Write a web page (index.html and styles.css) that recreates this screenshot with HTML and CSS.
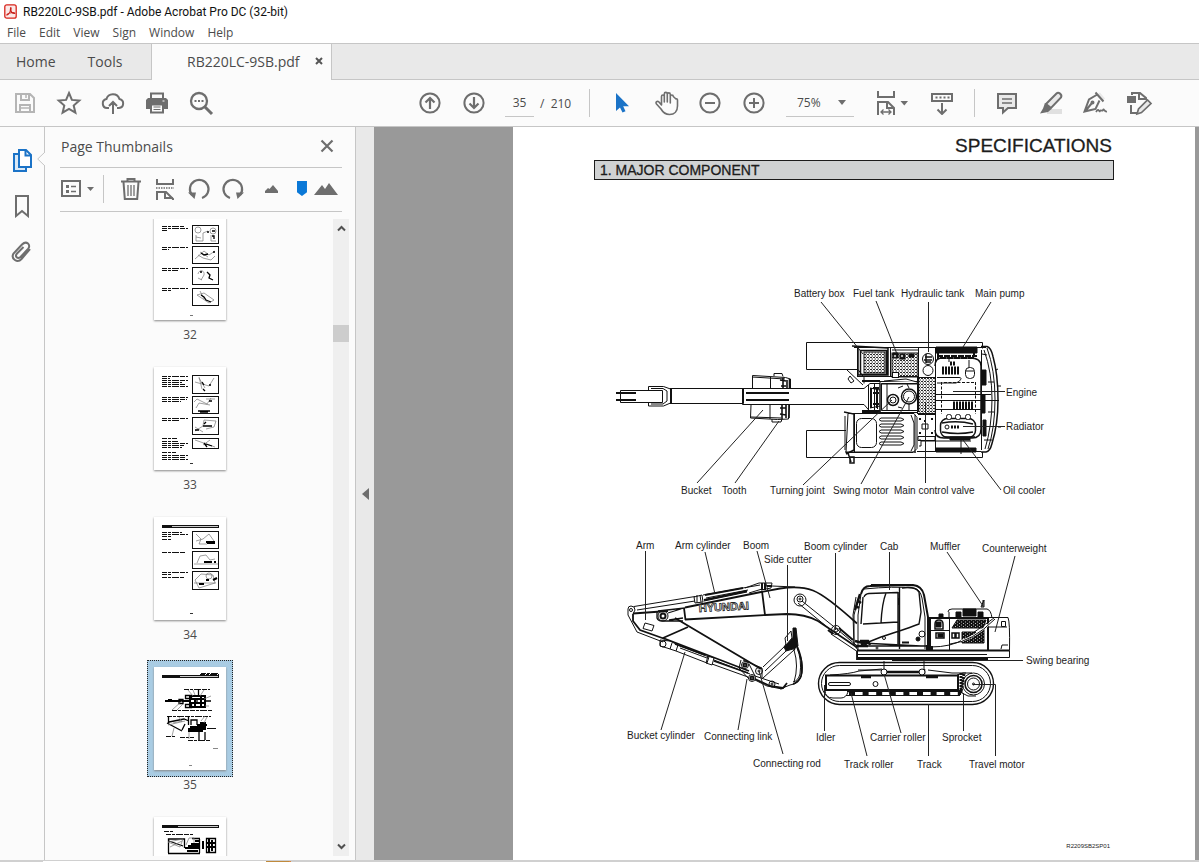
FILE: index.html
```html
<!DOCTYPE html>
<html lang="en">
<head>
<meta charset="utf-8">
<title>RB220LC-9SB.pdf - Adobe Acrobat Pro DC (32-bit)</title>
<link rel="stylesheet" href="styles.css">
</head>
<body>
<header class="titlebar">
  <svg class="app-icon" viewBox="0 0 13 15"><rect x=".8" y=".8" width="11.4" height="13.4" rx="2" fill="#fbe9e8" stroke="#d8251c" stroke-width="1.3"/><path d="M3 11c1.500-.5 3.500-3 3.500-6.500 0-1.500 1-1 .5.5C6.500 7.500 8 9.500 10.300 9.500c1 0 .5-1-1-1C7 8.500 4 9.500 3 10.500z" fill="none" stroke="#c8201a" stroke-width="1.100"/></svg>
  <h1 class="window-title">RB220LC-9SB.pdf - Adobe Acrobat Pro DC (32-bit)</h1>
</header>
<nav class="menubar">
  <button>File</button><button>Edit</button><button>View</button><button>Sign</button><button>Window</button><button>Help</button>
</nav>
<nav class="tabs">
  <div class="tabs-fixed"><button class="tab-home">Home</button><button class="tab-tools">Tools</button></div>
  <div class="tab-doc"><span>RB220LC-9SB.pdf</span><button class="tab-close" aria-label="Close tab"><svg width="8" height="8" viewBox="0 0 8 8"><path d="M1 1l6 6M7 1l-6 6" stroke="#555" stroke-width="2"/></svg></button></div>
</nav>
<div class="toolbar">
  <div class="tools">
    <button aria-label="Save"><svg width="24" height="24" viewBox="0 0 24 24" fill="none" stroke="#b5b5b5" stroke-width="2"><path d="M3 3h14l4 4v14H3zM8 3v6h8V3M7 21v-7h10v7"/><path d="M13 4v3M8 17h8" stroke-width="1.500"/></svg></button>
    <button aria-label="Star"><svg width="26" height="26" viewBox="0 0 26 26" fill="none" stroke="#6e6e6e" stroke-width="2"><path d="M13 3l2.900 6.900 7.400.7-5.600 4.900 1.700 7.200L13 18.900l-6.400 3.800 1.700-7.200-5.600-4.900 7.400-.7z"/></svg></button>
    <button aria-label="Upload"><svg width="24" height="24" viewBox="0 0 24 24" fill="none" stroke="#6e6e6e" stroke-width="2"><path d="M8 17H6a4.500 4.500 0 0 1-.6-8.900 6.800 6.800 0 0 1 13-.2A4.600 4.600 0 0 1 18 17h-2M12 23V11M8 15l4-4 4 4"/></svg></button>
    <button aria-label="Print"><svg width="24" height="24" viewBox="0 0 24 24"><path d="M6 2.500h12V8H6z" fill="#fbfbfb" stroke="#6e6e6e" stroke-width="2"/><path d="M3 7h18l2 2v9H1V9z" fill="#6e6e6e"/><path d="M6 13.500h12v8H6z" fill="#fbfbfb" stroke="#6e6e6e" stroke-width="2"/><path d="M8.500 16h7M8.500 18.500h7" stroke="#6e6e6e"/><path d="M17.500 10h2" stroke="#fff"/></svg></button>
    <button aria-label="Find"><svg width="26" height="26" viewBox="0 0 26 26" fill="none" stroke="#6e6e6e" stroke-width="2.300"><circle cx="11" cy="11" r="8"/><path d="M17 17l7 7" stroke-width="3"/><path d="M6.500 11h9" stroke-width="2" stroke-dasharray="2 1.500"/></svg></button>
  </div>
  <div class="tools tools-main">
    <button aria-label="Previous page"><svg width="24" height="24" viewBox="0 0 24 24" fill="none" stroke="#6e6e6e" stroke-width="2"><circle cx="12" cy="12" r="9.600"/><path d="M12 18V8M7.500 11.500L12 7l4.500 4.500" stroke-width="2.200"/></svg></button>
    <button aria-label="Next page"><svg width="24" height="24" viewBox="0 0 24 24" fill="none" stroke="#6e6e6e" stroke-width="2"><circle cx="12" cy="12" r="9.600"/><path d="M12 6v10M7.500 12.500L12 17l4.500-4.500" stroke-width="2.200"/></svg></button>
    <label class="page-count"><input type="text" value="35" aria-label="Page number"><span>/&nbsp; 210</span></label>
    <i class="divider"></i>
    <button class="after-divider" aria-label="Select"><svg width="24" height="24" viewBox="0 0 24 24"><path d="M6 2v18l4-3.500 2.500 5 3-1.300-2.300-5H19z" fill="#1b73c7"/></svg></button>
    <button aria-label="Pan"><svg width="26" height="26" viewBox="0 0 26 26" fill="none" stroke="#6e6e6e" stroke-width="1.600" stroke-linejoin="round"><path d="M8.500 15V6.500c0-2 2.800-2 2.800 0V12 4c0-2.200 3-2.200 3 0v8V4.500c0-2.200 3-2.200 3 0V13 6.500c0-2 3-2 3 0L23 9c1-.6 1.500 0 1.500 1.500V16c0 5-3 8.500-8 8.500-4.500 0-6.500-2-8.500-5.500l-4.500-5c-1.500-2 .8-3.500 2.500-2z"/></svg></button>
    <button aria-label="Zoom out"><svg width="24" height="24" viewBox="0 0 24 24" fill="none" stroke="#6e6e6e" stroke-width="2"><circle cx="12" cy="12" r="9.600"/><path d="M7 12h10"/></svg></button>
    <button aria-label="Zoom in"><svg width="24" height="24" viewBox="0 0 24 24" fill="none" stroke="#6e6e6e" stroke-width="2"><circle cx="12" cy="12" r="9.600"/><path d="M7 12h10M12 7v10"/></svg></button>
    <label class="zoom"><select aria-label="Zoom level"><option>75%</option></select><svg width="8" height="5" viewBox="0 0 8 5"><path d="M0 0h8L4 5z" fill="#6e6e6e"/></svg></label>
    <button class="fit" aria-label="Fit width"><svg width="32" height="26" viewBox="0 0 32 26" fill="none" stroke="#6e6e6e" stroke-width="2"><path d="M2 1v6h16V1M2 25V12h10l6 6v7M11 12v6h7"/><path d="M5.500 22h9M7.500 19.500L5 22l2.500 2.500M12.500 19.500L15 22l-2.500 2.500" stroke-width="1.300"/><path d="M24.500 11h7.500l-3.700 4.500z" fill="#6e6e6e" stroke="none"/></svg></button>
    <button class="scroll-mode" aria-label="Scrolling"><svg width="24" height="24" viewBox="0 0 24 24" fill="none" stroke="#6e6e6e" stroke-width="2"><rect x="2" y="3" width="20" height="7"/><path d="M5.500 6.500h14" stroke-dasharray="2 2"/><path d="M12 12v11M7.500 18.500L12 23l4.500-4.500"/></svg></button>
    <i class="divider"></i>
    <button class="after-divider" aria-label="Comment"><svg width="24" height="24" viewBox="0 0 24 24" fill="#e9e9e9" stroke="#6e6e6e" stroke-width="2"><path d="M3 3h18v14h-8l-5 4.500V17H3z"/><path d="M7 8h10M7 12h10" stroke-width="1.400"/></svg></button>
    <button aria-label="Highlight"><svg width="26" height="26" viewBox="0 0 26 26"><path d="M9 19h15v5H9z" fill="#e0e0e0"/><path d="M8 14L18.500 3.500c2-2 6 1 4.500 4L13 18z" fill="#e9e9e9" stroke="#6e6e6e" stroke-width="2"/><path d="M7 13l6.500 6L10 22 2 23.500l3-5z" fill="#6e6e6e"/></svg></button>
    <button aria-label="Sign"><svg width="26" height="26" viewBox="0 0 26 26" fill="none" stroke="#6e6e6e" stroke-width="2"><path d="M14 5l4-2.500 5 6-3 3z" fill="#e9e9e9" stroke="none"/><path d="M13.500 2.500l8 9M14.500 5L7 9.500 2.500 21.500 13.500 19l4-8.500M3 21.500l6.500-8"/><circle cx="10.500" cy="12.500" r="1"/><path d="M14 22c3-5 3 1 4-1s2 1 3-1 1 2 4 1.500" stroke-width="1.700"/></svg></button>
    <button aria-label="Edit and export"><svg width="28" height="26" viewBox="0 0 28 26" fill="none" stroke="#6e6e6e" stroke-width="2"><path d="M7 5V3h8l6 5v2M14 3v6h7M6 15v8h6"/><path d="M2 6h9v7H2z" fill="#6e6e6e" stroke="none"/><path d="M12 24l1.500-5L22.500 10l3.500 3.500-9.500 9z" fill="#e9e9e9" stroke-width="1.700"/></svg></button>
  </div>
</div>
<main class="workspace">
  <nav class="rail">
    <button aria-label="Thumbnails"><svg width="22" height="24" viewBox="0 0 22 24" fill="#fff" stroke="#1b73c7" stroke-width="2"><path d="M7 6H3v17h12v-4" fill="#dbe9f6"/><path d="M8 2h7l5 5v12H8z"/><path d="M14.500 2v5.500H20" fill="none"/></svg></button>
    <button aria-label="Bookmarks"><svg width="16" height="24" viewBox="0 0 16 24" fill="none" stroke="#6e6e6e" stroke-width="2"><path d="M2 2h12v20l-6-5-6 5z"/></svg></button>
    <button aria-label="Attachments"><svg width="24" height="24" viewBox="0 0 24 24" fill="none" stroke="#6e6e6e" stroke-width="2"><path d="M20 9l-8.500 10c-4 4.500-11 0-8-5.500L12 4.500c4.500-4.500 9.500.5 6 4.500l-7.500 8c-3 2.500-6-.5-3.500-3.500L13.500 7"/></svg></button>
    <svg class="notch" width="8" height="14" viewBox="0 0 8 14"><path d="M8 0L.7 7 8 14" fill="#fbfbfb" stroke="#c6c6c6"/></svg>
  </nav>
  <section class="panel">
    <div class="panel-head"><h2>Page Thumbnails</h2><button aria-label="Close panel"><svg width="14" height="14" viewBox="0 0 14 14"><path d="M1.500 1.500l11 11M12.500 1.500l-11 11" stroke="#6e6e6e" stroke-width="2.200"/></svg></button></div>
    <div class="panel-tools">
      <button class="options" aria-label="Options"><svg width="34" height="18" viewBox="0 0 34 18"><rect x="1" y="1" width="18" height="15" fill="none" stroke="#6e6e6e" stroke-width="2"/><path d="M5 6.500h3M5 11.500h3" stroke="#6e6e6e" stroke-width="3"/><path d="M10 6.500h5M10 11.500h5" stroke="#6e6e6e" stroke-width="1.500"/><path d="M26 7h7l-3.500 4z" fill="#6e6e6e"/></svg></button>
      <i class="divider small"></i>
      <button aria-label="Delete"><svg width="22" height="24" viewBox="0 0 22 24" fill="none" stroke="#6e6e6e" stroke-width="2"><path d="M1 4.500h20M7.500 4V2h7v2M3.500 5l1.300 17h12.400l1.300-17"/><path d="M8 8v11M11 8v11M14 8v11" stroke-width="1.300"/></svg></button>
      <button aria-label="Split pages"><svg width="20" height="24" viewBox="0 0 20 24" fill="none" stroke="#6e6e6e" stroke-width="2"><path d="M2 2v5h16V2M2 23v-8h9l7 7v1M10 15v6h8"/><path d="M1 11h18" stroke-width="1.500" stroke-dasharray="1.500 1"/></svg></button>
      <button aria-label="Rotate left"><svg width="24" height="24" viewBox="0 0 24 24" fill="none" stroke="#6e6e6e" stroke-width="2.200"><path d="M15 21a9.300 9.300 0 1 0-10-3"/><path d="M1 15.500h8L7.500 22z" fill="#6e6e6e" stroke="none"/></svg></button>
      <button aria-label="Rotate right"><svg width="24" height="24" viewBox="0 0 24 24" fill="none" stroke="#6e6e6e" stroke-width="2.200"><path d="M9 21a9.300 9.300 0 1 1 10-3"/><path d="M23 15.500h-8l1.500 6.500z" fill="#6e6e6e" stroke="none"/></svg></button>
      <label class="size"><svg width="13" height="8" viewBox="0 0 13 8"><path d="M0 8V6l3-3 1.500 1L8 0l5 6v2z" fill="#6e6e6e"/></svg><input type="range" min="0" max="100" value="73" aria-label="Thumbnail size"><svg width="24" height="14" viewBox="0 0 24 14"><path d="M0 13l8-10 3 4 4-6 9 12z" fill="#6e6e6e"/></svg></label>
    </div>
    <div class="thumb-area">
      <ol class="thumbs">
        <li><button aria-label="Page 32"><svg viewBox="0 0 72 103"><g class="words"><path d="M8 9h22M8 11h26M8 13h6M8 30h26M8 32h7M8 51h26M8 53h16M8 71h26M8 73h9"/></g><g class="frames"><rect x="38.500" y="8.500" width="26" height="18"/><rect x="38.500" y="29.500" width="26" height="17"/><rect x="38.500" y="50.500" width="26" height="17"/><rect x="38.500" y="71.500" width="26" height="17"/></g><g class="scribble"><circle cx="44" cy="13" r="3"/><circle cx="59" cy="14" r="3"/><path d="M42 18v6h7v-8l5-2M42 20l5 1M57 18v6h5M41 42l9-8 5 4 6-4M44 38l5 3 8 2 4-4M46 35l8 5M44 57c1-5 7-4 6 1l-3 5M44 61l4 2M43 78l12 8 5-3-10-7zM46 74l4 8"/></g><path class="dark thin" d="M58 14h3M58 19h2v3M53 15h2M47 36l3 2 4-1M59 35h2M46 55h2M53 55l3 3-1 3 4 2M47 78l3 2 2 3 5 2"/><path d="M36 98.500h3" stroke="#777"/></svg></button><span>32</span></li>
        <li><button aria-label="Page 33"><svg viewBox="0 0 72 103"><g class="words"><path d="M8 9h26M8 11h8M8 13h26M8 15h20M8 17h24M8 19h26M8 30h26M8 32h25M8 34h19M8 51h26M8 53h18M8 71h15M8 74h16M8 76h26M8 78h22M8 80h20M8 85h14M8 88h26M8 90h24M8 92h26"/></g><g class="frames"><rect x="38.500" y="8.500" width="26" height="18"/><rect x="38.500" y="29.500" width="26" height="17"/><rect x="38.500" y="50.500" width="26" height="17"/><rect x="38.500" y="71.500" width="26" height="10"/></g><g class="scribble"><path d="M45 10l3 12M45 11l6 10M41 15l14 4 5-8M40 35l3-3 10 5 4-6M42 41l3-5 11 2M52 32h9M41 64l8-5 1-6 12 1-2 6-8 2M41 60l8 5M41 73l20 7M49 78l7-5"/></g><path class="dark thin" d="M48 15l2 3M49 22l2 2M55 18h2M55 34h3M44 44h12M46 45h8M49 59h9M50 57l2-2M41 63h4M52 77l6 2M50 76l3 4"/><path d="M36 96.500h3" stroke="#333"/></svg></button><span>33</span></li>
        <li><button aria-label="Page 34"><svg viewBox="0 0 72 103"><rect class="banner" x="8.500" y="8.500" width="56" height="2"/><path d="M9 9.500h9" stroke="#111"/><g class="words"><path d="M8 15h20M8 17h26M8 19h9M8 22h10M8 35h23M8 55h26M8 57h9M8 60h22"/></g><g class="frames"><rect x="38.500" y="14.500" width="26" height="17"/><rect x="38.500" y="34.500" width="26" height="17"/><rect x="38.500" y="54.500" width="26" height="18"/></g><g class="scribble"><path d="M42 17l5 5-2 5h8M42 24l7-2 6-5 5 7M43 46l3-7 6-1 4 5 5-1M41 63l6-6 12 1 2 8-16 5-4-8M40 66h22M40 47h24"/><circle cx="55" cy="59" r="3"/></g><path class="dark" d="M52 25h9M53 26h8M50 45h8M60 45h2M45 67h5M59 63l4-2M52 63h3"/><path d="M36 96.500h3" stroke="#333"/></svg></button><span>34</span></li>
        <li class="selected"><button aria-label="Page 35"><svg viewBox="0 0 72 103"><g class="words"><path d="M46 7h19M47 6h17M30 22h26M18 43h40M13 49h44M12 69h10M26 70h14M34 73h22"/></g><rect class="banner" x="8.500" y="8.500" width="56" height="2"/><path d="M9 9.500h17" stroke="#111"/><path class="dark thin" d="M31.500 28.500h6v3h-6zM31.500 37.500h6v3h-6zM25 32.500h4v4h-4zM13 56l15 8M15 55l15-3 5 2M14.500 56v-7M28 63l3-6M37 58v-5h6v5M34.500 49v9M44.500 22v6M43 31v5M52 34h5M45 65v8M51 65v8"/><path class="dark" d="M11 34h24M14 33h4M36 29h15v11H36zM36 32h15M37 36h14M41 31v9M47 30v10M34 62h18M34 64h15M36 60h16M43 58h10M46 56h6"/><g class="scribble"><path d="M34 23l5 6M39 23l2 5M50 23l-4 6M18 43l10-9M23 43l6-6M14 58l17-4M19 56l9-2M25 50l3 5M18 69l2-8M35 65v7M47 54l4-5M50 56l3-6M50 32l7-3M51 39h4"/></g><path d="M53 61.500h9" stroke="#111"/><path d="M59 81.500h5M35 98.500h3" stroke="#888"/></svg></button><span>35</span></li>
        <li><button aria-label="Page 36"><svg viewBox="0 0 72 103"><rect class="banner" x="8.500" y="8.500" width="56" height="2"/><path d="M9 9.500h15" stroke="#111"/><g class="words"><path d="M10 14h9M12 17h27"/></g><path class="dark thin" d="M14.500 36V22h16v9M14 36.500h32M45.500 36V22M38 21.500h8M52.500 21.500h9v14h-9zM15 24l14 5"/><path class="dark" d="M31 31h15M34 29h12M37 27h8M41 24h4M53 26h8M53 30h8M55 22v13M49 24v8M58 23v11M33 34h11"/><g class="scribble"><path d="M14 25l15-3-3 8zM16 30l12-6M32 28l3-7h5v5"/></g></svg></button></li>
      </ol>
      <div class="scrollbar"><svg width="9" height="7" viewBox="0 0 9 7"><path d="M1 5.500L4.500 2 8 5.500" fill="none" stroke="#505050" stroke-width="2"/></svg><i></i><svg width="9" height="7" viewBox="0 0 9 7"><path d="M1 1.500L4.500 5 8 1.500" fill="none" stroke="#505050" stroke-width="2"/></svg></div>
    </div>
  </section>
  <button class="splitter" aria-label="Collapse panel"><svg width="7" height="12" viewBox="0 0 7 12"><path d="M7 0v12L0 6z" fill="#6e6e6e"/></svg></button>
  <section class="viewer">
    <article class="page">
      <h2 class="page-title">SPECIFICATIONS</h2>
      <h3 class="page-section">1. MAJOR COMPONENT</h3>
      <svg class="diagram" viewBox="594 280 520 500">
        <defs>
          <pattern id="hatch" width="3" height="3" patternUnits="userSpaceOnUse"><path d="M0 .5h2M1.500 2h1.500" stroke="#111" stroke-width=".9"/></pattern>
          <pattern id="dense" width="4" height="3" patternUnits="userSpaceOnUse"><rect width="4" height="3" fill="#111"/><path d="M1 1h1M3 2.500h1" stroke="#fff" stroke-width=".7"/></pattern>
        </defs>
        <g class="ink">
          <!-- plan view: tracks -->
          <path d="M806.500 342.500h176v27h-176zM806.500 430.500h176v27h-176z"/>
          <!-- bucket -->
          <path d="M752.500 388v-12.500l33 2 5 1.500v9M751 405l-.5 13 27 1.500 11-.5 1-14M770.500 377v11M770 405v14M774 376v-2.500h8l1 3M772 419v3h9l1-3M752 377l33 2M751 417l30 1"/>
          <path d="M783 378v10M787 380v8M789.500 379v9M782 405v14M786 405v13M789 405v13M780 380l6 1M781 386h5M780 408h6M780 414l6 1" stroke-width="1.600"/>
          <!-- arm and boom -->
          <path d="M671.500 388.500h72v15h-72zM620.500 390.500h42v12h-42z"/>
          <path d="M648.500 390.500v-4h15l7 2.500v14l-7 3h-15v-3.500M651 388.500h12l4 2.500v10l-4 3h-12"/>
          <path d="M616 393h20M616 400h20M671 388v16M746 393h43M746 400h43" stroke-width="2"/>
          <path d="M742.500 388.500H864v16H742.500z"/>
          <!-- upper structure -->
          <path class="solid" d="M857 348.500h129V452H846V413h17V380h-6z" stroke="none"/>
          <path d="M854 347.500h132M857.500 348v28.500M857 376.500h61M847 369.500h11l6 8v6M847 370l16 15M850 376l4 5-3 2-3-4z"/>
          <path d="M852 346l36 2v27h-30v-27M860.500 350.500h26v24h-26z" stroke-width="1.500"/>
          <rect x="864" y="352" width="21" height="21" fill="url(#hatch)"/>
          <path d="M890.500 348v28M918.500 348v64M892 350h26M935.500 347v104"/>
          <rect x="892" y="353" width="26" height="24" fill="url(#hatch)"/>
          <path class="black" d="M893 353h5v5h-5zM900 354h5v5h-5zM909 354h5v3h-5z"/>
          <circle class="solid" cx="895" cy="356" r="1.500"/><circle class="solid" cx="902" cy="356" r="1.500"/><rect class="solid" x="892.500" y="372.500" width="6" height="5"/>
          <circle cx="928" cy="359" r="5.500"/><circle cx="928" cy="370.500" r="5"/><path d="M925 357h7M924 360h8M926 362h5M926 354v9" stroke-width="1.500"/>
          <rect x="917.500" y="377.500" width="18" height="36" fill="url(#hatch)"/>
          <!-- boom foot -->
          <path class="solid" d="M857 388.500h7l6-5h10v28h-10l-6-7h-7"/>
          <path d="M868.500 385v27M874.500 384v28M877.500 388v21M880 382v31M862 381.500h55M862 412.500h55M870 388l10 2M870 408l10-2"/>
          <path d="M873 388h6M873 393h6M873 404h6M871 388v20M877 388v20M862 381h18M862 411h18" stroke-width="2"/>
          <path class="solid" d="M881.500 383.500h36v27h-36zM884 381l22-2 11 3"/>
          <circle class="solid" cx="893" cy="400" r="5.500" stroke-width="1.500"/><circle class="solid" cx="909" cy="396.500" r="7.500" stroke-width="1.500"/><circle cx="909" cy="396.500" r="5.500"/><circle cx="893" cy="400" r="3"/>
          <path d="M881 384h36M887 384v26M898 388l5-2M898 407l4 1M907 384l2 4M909 404v6"/>
          <!-- cab -->
          <path class="solid" d="M848 413.500h66l3 4v31l-4 4h-67zM845 416v34M854.500 413v39M845 452h71"/>
          <path d="M844 412l10 2v36l-8 4M848 453l3 9M850 457h4v6h-4z" stroke-width="1.500"/>
          <rect x="856.500" y="418.500" width="20" height="29" rx="5"/>
          <path d="M881 418h20l3 1.500-3 1.500h-20l-2-1.500zM881 424h20l3 1.500-3 1.500h-20l-2-1.500zM881 430h20l3 1.500-3 1.500h-20l-2-1.500zM881 436h20l3 1.500-3 1.500h-20l-2-1.500zM881 442h20l3 1.500-3 1.500h-20l-2-1.500zM911 415l3 8v22l-3 6M915 415v38"/>
          <!-- engine bay -->
          <path class="black" d="M936 347h41v6h-41zM936 448h40v4h-40z"/>
          <path d="M937 356h40M938 353v5h36v-5" stroke-width="2" stroke-dasharray="6 1"/>
          <path d="M935 366q0-8 7-8h28q11 0 11 8v63q0 9-9 9h-28q-9 0-9-8" stroke-width="1.500"/>
          <path d="M937 377.500h22q4 0 0 4l-3 1.500h-19M935 394.500h56M935 400.500h64M935 409.500h46M981.500 350v100"/>
          <path d="M942 368.500h17M942 372.500h17M950 363.500h5" stroke-width="4" stroke-dasharray="2 1"/>
          <path d="M953 405.500h20" stroke-width="8" stroke-dasharray="2 1"/>
          <path d="M941.500 382v32M975.500 382v32M944 382.500h31" stroke-dasharray="3 1.500"/>
          <rect x="965.500" y="367.500" width="9" height="11" rx="4"/><path d="M965 371h9M969 360v8M949 358v4"/>
          <rect class="solid" x="940.500" y="418.500" width="35" height="19" rx="7" stroke-width="1.500"/>
          <path d="M942 423q16-3 31 1M942 432q16 3 31 0M945 437h30" stroke-width="1.500"/><circle cx="947" cy="427" r="2"/><path d="M951 427h9" stroke-width="3" stroke-dasharray="2 1"/>
          <rect class="solid" x="946.500" y="414.500" width="5" height="5" rx="2"/><rect class="solid" x="955.500" y="414.500" width="5" height="5" rx="2"/><rect class="solid" x="965.500" y="414.500" width="5" height="5" rx="2"/>
          <path class="black" d="M950 437h20v3h-20zM982 370h4v15h-4zM982 395h3v18h-3zM983 420h3v16h-3z"/>
          <path d="M918 414.500h17M918 436.500h17v4h-17zM922 424h6v5h-6zM917 451.500h64M919 440h2v6h-2M921 441h50M961 438v16"/>
          <path d="M925 420v2M932 418v2M920 418v2M920 432v2M932 432v2" stroke-width="2"/>
          <!-- counterweight, plan -->
          <path d="M981 346.500h6q4 1 6 10 5 18 5 43t-6 44q-2 8-6 8.500h-5" stroke-width="1.500"/>
          <path d="M984 350q8 22 8 49t-7 50M987 348q8 22 8 51t-7 50M982 354l5 1M988 382h6M988 412h6M996 370l2-1M998 386h3M998 427h3M984 440h8"/>
          <!-- side view: arm -->
          <path d="M633 613.500l35-2.500M633 614v7l7 9 25 9M663 638l25-11" stroke-width="1.800"/>
          <path d="M663 638l86 33M675 618l86 51" stroke-width="1.800"/>
          <path d="M628 609q0-3 3-3 4 0 4 4l-2 4M628 609v6l9 17 26 10M645 623l9 2.500-2 5.500-9-2.500z"/>
          <circle cx="631" cy="610" r="1.500"/>
          <path d="M657 612v6q1 3 5 3h21M658 611l27-3M669 620l14-2M668 613l16-5" stroke-width="1.300"/><circle cx="663" cy="616" r="5"/><circle cx="663" cy="616" r="2.500" stroke-width="2"/>
          <!-- arm cylinder -->
          <path d="M634 606.500l61-10M637 610l58-9M694 597l8-2 1 7-8 1zM700 595l1 7M703 595l57-10M704 601l43-9M706 598l42-8M745 588l14-5h13l-1 5-10 2M749 593l13-4M697 595v8"/>
          <path d="M704 600l43-9M705 595l38-7M762 583v7M765 583v7M767 586h5" stroke-width="2"/>
          <!-- boom -->
          <path d="M685 607.500l76-15.500 19-3.500q20-3 33 2t44 33M685 619.500l80-4.500 22-1q18 0 31 7l40 27M684 608l1.500 12M762 591l3 24" stroke-width="1.800"/>
          <path d="M772 586l23 1"/>
          <circle class="solid" cx="800" cy="600" r="6"/><circle cx="800" cy="599" r="3"/><circle cx="800" cy="599" r="1"/>
          <path d="M798 603l34 28M802 601l36 29M831 634l27 18M838 630l18 15"/><circle cx="836" cy="630" r="4.500"/><circle cx="836" cy="630" r="2"/><path d="M839 628l14 12M833 634l-5-4" stroke-width="2"/>
          <!-- bucket cylinder -->
          <circle cx="663" cy="644" r="3"/><path d="M660 640l10 1 8 4 31 12-2 6-31-12-9-3-7-2zM678 645l-2 6M672 643l-2 6M708 656l6 2-2 7-6-2zM714 660l36 14M712 664l36 13M680 648l27 10"/>
          <path d="M675 644l30 11M714 661l34 12" stroke-width="1.800"/>
          <!-- linkage and bucket -->
          <circle cx="745" cy="665" r="3.500"/><circle cx="745" cy="665" r="1.500" stroke-width="2"/><circle cx="759" cy="671" r="3.500"/><circle cx="759" cy="671" r="1"/><circle cx="752" cy="678" r="3.500"/><circle cx="752" cy="678" r="1.500" stroke-width="2"/><circle cx="772" cy="684" r="3"/><circle cx="772" cy="684" r="1"/>
          <path d="M741 660l-2 8 10 11M749 664l6 12M743 660l19 8v10M755 680l12 6 15 3 4-3M755 676l24 8M763 667l22-21M763 678l31-28M796 645q8 16 6 28-2 11-12 12l-10 4M794 650q5 16 0 32M797 648q5 12 3 26-2 7-7 8M765 671l21-20"/>
          <path d="M755 679l15 7 13 2 4-5M794 650l2-5M797 646q7 16 4 30-2 6-8 8" stroke-width="1.800"/>
          <path class="black" d="M793 628h3l2 18-5 3-7 2-2-4 4-6 5-3z"/><path class="solid" d="M785 638l6-7 1 7-6 7zM790 643l3-2"/>
          <!-- upper body, side -->
          <path class="solid" d="M857.500 650.500V595l6-8 50-1q9 0 12 14l2.500 18h4v-1h15v-4q1-3 4-3h30q8 0 8 7h15q5 1 5 14v18z" stroke="none"/>
          <path d="M857.500 650.500h152v7h-152zM857 654.500h130"/><path d="M857 650.500h152M857 651v8h131" stroke-width="1.800"/>
          <path d="M861 594q2-8 9-8l43-1q9 1 11 10l4 22v33" stroke-width="2"/>
          <path d="M864 589q30-3 50-1 6 1 8 10l3 19v32M861 594l-3 21v35M859 596l-5 19v30M856 597l-3 18 1 30 4 5M871 584.500h40"/>
          <path d="M864 597q1-3 5-3.500l29-1M863 597l-2 27M863 624l35-2M899.500 587v62M898 592v52M886 593q-4 10-5 30M902 588q13-2 17 4l2 20-2 12q-10 4-38 13l-20 8M859 646h67M861 643l60 3" stroke-width="1.400"/>
          <path d="M860 594l-5 16M857 600l4 3M856 606l3 2M855 641l12 3M856 646h12M860 641h8l2 4" stroke-width="2.500"/>
          <circle class="black" cx="918" cy="639" r="2"/><circle cx="922" cy="634" r="3"/><circle cx="884" cy="638" r="1.500"/><circle cx="877" cy="648" r="1"/><path d="M902 642.500h7M899 598v7M927 645v5h5v-4" stroke-width="2"/>
          <!-- engine housing -->
          <path d="M928.500 618.500h60v31M928 630.500h21M949.500 618v32M928 617.500h80q2 4 1.500 33M948 612q0-3 4-3h35q4 1 5 9M949 617v-5M930 647q22 0 34-8t30-21"/>
          <path d="M988 618v32M927 618h61M930 618v32" stroke-width="2"/>
          <path class="black" d="M939 617v-3h4v3zM963 609h13v7h-13zM956 612h5v5h-5zM978 612h5v5h-5z"/>
          <path d="M935 624q0-4 4-4t4 4v5h-8zM936 633h8v5h-8zM952 633h3v5h-3zM956 633h3v5h-3z" stroke-width="1.500"/><path class="black" d="M936 622h5v5h-5zM938 634h5v3h-5z"/>
          <path d="M957 620h29l-3 8h-31z" fill="url(#dense)"/><path d="M962 632h14l-3 4 11-7v14h-22z" fill="url(#dense)"/>
          <path d="M961 641q15-4 34-22" stroke="#fff" stroke-width="2"/><path d="M950 644q22-2 45-25"/>
          <path d="M989 627h18M1001.500 621.500h4v5h-4zM1001 649l1-4h6M983 607v-7M981 607l3-7v7z"/>
          <!-- undercarriage -->
          <rect x="818.500" y="662.500" width="175" height="42" rx="21" stroke-width="1.400"/><rect x="821.500" y="665.500" width="169" height="36" rx="18"/>
          <path d="M892 660.500h24M884 661v9M924 661v9M882 665.500h44M858 670l26 0M830 675q20-1 29-4l23-2M928 670l24 3h14"/>
          <path d="M826 675.500h132v14.500h-132zM826 675v15M958 675v16" stroke-width="2"/>
          <rect x="828.500" y="682.500" width="22" height="3" rx="1.500"/><circle cx="875.500" cy="684" r="2.500"/>
          <path d="M886 672h38M861 677h10M926 677h12M884 669v5M924 669v5" stroke-width="2.500"/><circle class="solid" cx="884" cy="672" r="3"/><circle class="solid" cx="922" cy="672" r="3"/>
          <path d="M825 690q0 8 8 8h8q5 0 7-6M846 695.500h114"/>
          <path d="M849 692.500h112" stroke-width="5" stroke-dasharray="6 7.600"/><path d="M847 691h112" stroke-width="2"/>
          <circle cx="973.500" cy="684" r="11"/><circle cx="973.500" cy="684" r="8.500" stroke-width="1.600"/><circle cx="973.500" cy="684" r="6"/><circle cx="973.500" cy="684" r="1"/>
          <path d="M961 673v20M964 674l-3 18M958 692l4-3" stroke-width="3" stroke-dasharray="2 1"/>
          <path d="M957 675l6-2h9M960 692l8 4h8"/>
        </g>
        <text class="brand" x="699" y="612" transform="rotate(-3 699 612)">HYUNDAI</text>
        <g class="leaders">
          <path d="M821 302l42 52M876 301l21 53M928.500 302v50M991 302l-28 45M953 391.500h52M963 426.500h42M963 440l38 50M925.500 403v80M861 484l48-87M803 485l89-85M697 483l66-73M735 483l44-62"/>
          <path d="M645.500 551v69M705 552l10 42M757 551l13 47M787.500 565v76M835.500 553v77M889.500 552v38M947 552l36 54M1015 556l-20 76M916 660.500h107M661 730l24-78M738 730l9-51M783 754l-24-83M824.500 731v-46M901 733l-17-59M867 756l-16-63M928.500 756v-52M963.500 731v-38M973 684.500h22.500v71.500"/>
        </g>
        <g class="labels">
          <text x="794" y="297">Battery box</text><text x="853" y="297">Fuel tank</text><text x="901" y="297">Hydraulic tank</text><text x="975" y="297">Main pump</text>
          <text x="1006" y="396">Engine</text><text x="1006" y="430">Radiator</text>
          <text x="681" y="494">Bucket</text><text x="722" y="494">Tooth</text><text x="770" y="494">Turning joint</text><text x="833" y="494">Swing motor</text><text x="894" y="494">Main control valve</text><text x="1003" y="494">Oil cooler</text>
          <text x="636" y="549">Arm</text><text x="675" y="549">Arm cylinder</text><text x="743" y="549">Boom</text><text x="764" y="563">Side cutter</text><text x="804" y="550">Boom cylinder</text><text x="880" y="550">Cab</text><text x="930" y="550">Muffler</text><text x="982" y="552">Counterweight</text>
          <text x="1026" y="664">Swing bearing</text><text x="627" y="739">Bucket cylinder</text><text x="704" y="740">Connecting link</text><text x="816" y="741">Idler</text><text x="870" y="741">Carrier roller</text><text x="942" y="741">Sprocket</text>
          <text x="753" y="767">Connecting rod</text><text x="844" y="768">Track roller</text><text x="917" y="768">Track</text><text x="969" y="768">Travel motor</text>
        </g>
      </svg>
      <p class="figure-code">R2209SB2SP01</p>
    </article>
  </section>
</main>
<footer class="bottom-edge"><i></i></footer>
</body>
</html>
```
FILE: styles.css
```css
* { box-sizing: border-box; }
html, body { height: 100%; }
body { margin: 0; display: flex; flex-direction: column; overflow: hidden; background: #fbfbfb; color: #4b4b4b; font-family: "Open Sans", "Noto Sans", sans-serif; font-size: 12px; }
button, input, select { font: inherit; color: inherit; border: 0; background: none; padding: 0; margin: 0; }
button { display: flex; align-items: center; justify-content: center; flex: none; }
svg { display: block; flex: none; }
h1, h2, h3, p, ol { margin: 0; padding: 0; font-weight: 400; }

.titlebar { height: 23px; flex: none; display: flex; align-items: center; gap: 6px; padding-left: 4px; background: #fff; }
.app-icon { width: 13px; height: 15px; }
.window-title { font-family: Roboto, "Open Sans", sans-serif; font-size: 12px; color: #111; }
.menubar { height: 20px; flex: none; display: flex; gap: 13px; padding: 0 0 2px 7px; background: #fff; }

.tabs { height: 37px; flex: none; display: flex; background: #e9e9e9; border-top: 1px solid #c6c6c6; border-bottom: 1px solid #c6c6c6; font-size: 14px; }
.tabs-fixed { width: 151px; display: flex; align-items: center; gap: 32px; padding-left: 16px; }
.tab-doc { width: 181px; height: 36px; display: flex; align-items: center; gap: 15px; padding: 0 0 2px 35px; background: #fbfbfb; border-left: 1px solid #c6c6c6; border-right: 1px solid #c6c6c6; }

.toolbar { height: 47px; flex: none; display: flex; align-items: center; padding-left: 3px; border-bottom: 1px solid #c6c6c6; }
.tools { display: flex; align-items: center; }
.tools button { width: 44px; height: 46px; }
.tools-main { margin-left: 185px; }
.page-count { width: 93px; display: flex; align-items: center; gap: 6px; padding-left: 9px; }
.page-count input { width: 29px; height: 28px; text-align: center; border-bottom: 1px solid #c6c6c6; outline: 0; }
.divider { width: 1px; height: 28px; background: #c6c6c6; flex: none; }
.tools .after-divider { margin-left: 10px; }
.zoom { display: flex; align-items: center; width: 68px; height: 28px; margin-left: 10px; border-bottom: 1px solid #c6c6c6; }
.zoom select { appearance: none; width: 52px; height: 28px; padding-left: 11px; outline: 0; }
.tools .fit { width: 52px; margin-left: 12px; }
.tools .scroll-mode { margin-left: 2px; margin-right: 10px; }

.workspace { flex: 1; min-height: 0; display: flex; }
.rail { position: relative; width: 45px; flex: none; display: flex; flex-direction: column; padding-top: 10px; border-right: 1px solid #c6c6c6; }
.rail button { height: 46px; }
.notch { position: absolute; right: -1px; top: 25px; }
.panel { width: 311px; flex: none; display: flex; flex-direction: column; border-right: 1px solid #c6c6c6; padding: 0 0 4px 15px; }
.panel-head { height: 41px; flex: none; display: flex; align-items: center; justify-content: space-between; width: 282px; padding: 0 8px 2px 1px; border-bottom: 1px solid #c6c6c6; }
.panel-head h2 { font-size: 14px; }
.panel-tools { height: 44px; flex: none; width: 282px; display: flex; align-items: center; gap: 10px; padding: 0 0 2px 1px; border-bottom: 1px solid #c6c6c6; }
.panel-tools button { width: 24px; }
.panel-tools .options { width: 34px; }
.panel-tools .small { margin: 0 5px 0 -2px; }
.size { display: flex; align-items: center; margin-left: 10px; }
.size input { appearance: none; width: 36px; height: 16px; }
.size input::-webkit-slider-thumb { appearance: none; width: 10px; height: 15px; background: #0a78d7; clip-path: polygon(0 0, 100% 0, 100% 75%, 50% 100%, 0 75%); }
.thumb-area { flex: 1; min-height: 0; margin-top: 7px; display: flex; overflow: hidden; }
.thumbs { list-style: none; width: 273px; margin-top: -9px; }
.thumbs li { height: 150px; display: flex; flex-direction: column; align-items: center; padding-right: 13px; line-height: 16px; }
.thumbs button { width: 86px; height: 117px; border: 1px dotted transparent; }
.thumbs button svg { width: 72px; height: 103px; background: #fff; box-shadow: 0 1px 2px #888; }
.thumbs .selected button { background: #a9cce3; border-color: #222; }
.words { fill: none; stroke: #111; stroke-width: 1; stroke-dasharray: 5 1 3 1 7 1; shape-rendering: crispEdges; }
.frames { fill: #fff; stroke: #111; }
.banner { fill: #ccc; stroke: #111; }
.scribble { fill: none; stroke: #777; stroke-width: .7; }
.dark { fill: none; stroke: #000; stroke-width: 2; }
.thin { stroke-width: 1.3; }
.scrollbar { width: 16px; display: flex; flex-direction: column; align-items: center; justify-content: space-between; padding: 6px 0; background: #efefef; }
.scrollbar i { width: 16px; height: 17px; background: #cdcdcd; margin: 93px 0 auto; }

.splitter { width: 18px; background: #e9e9e9; }
.viewer { flex: 1; min-width: 0; background: #999; padding: 0 4px 0 139px; }
.page { height: 100%; display: flex; flex-direction: column; background: #fff; padding: 0 81px; color: #1c1c1c; font-family: "Liberation Sans", Arial, sans-serif; overflow: hidden; }
.page-title { font-size: 19px; line-height: 23px; margin: 7px 2px 3px; text-align: right; -webkit-text-stroke: .3px; }
.page-section { height: 20px; flex: none; font-size: 14px; line-height: 19px; padding-left: 5px; background: #d0d2d3; border: 1px solid #1c1c1c; -webkit-text-stroke: .3px; }
.diagram { width: 100%; margin-top: 100px; }
.ink { fill: none; stroke: #111; stroke-width: 1; }
.solid { fill: #fff; }
.black { fill: #111; }
.leaders { fill: none; stroke: #222; stroke-width: 1; }
.labels { font-size: 10px; fill: #1c1c1c; }
.brand { font-size: 11px; font-weight: 700; fill: #fff; stroke: #222; stroke-width: .8; }
.figure-code { margin: 62px 4px 0 auto; font-size: 6px; line-height: 8px; }

.bottom-edge { height: 2px; flex: none; background: #d0d0d0; padding: 1px 0 0 43px; }
.bottom-edge i { display: block; width: 248px; height: 1px; background: linear-gradient(90deg, #fff 223px, #c08a3c 223px 246px, #dd8a45 246px 272px, #fff 272px); }
```
